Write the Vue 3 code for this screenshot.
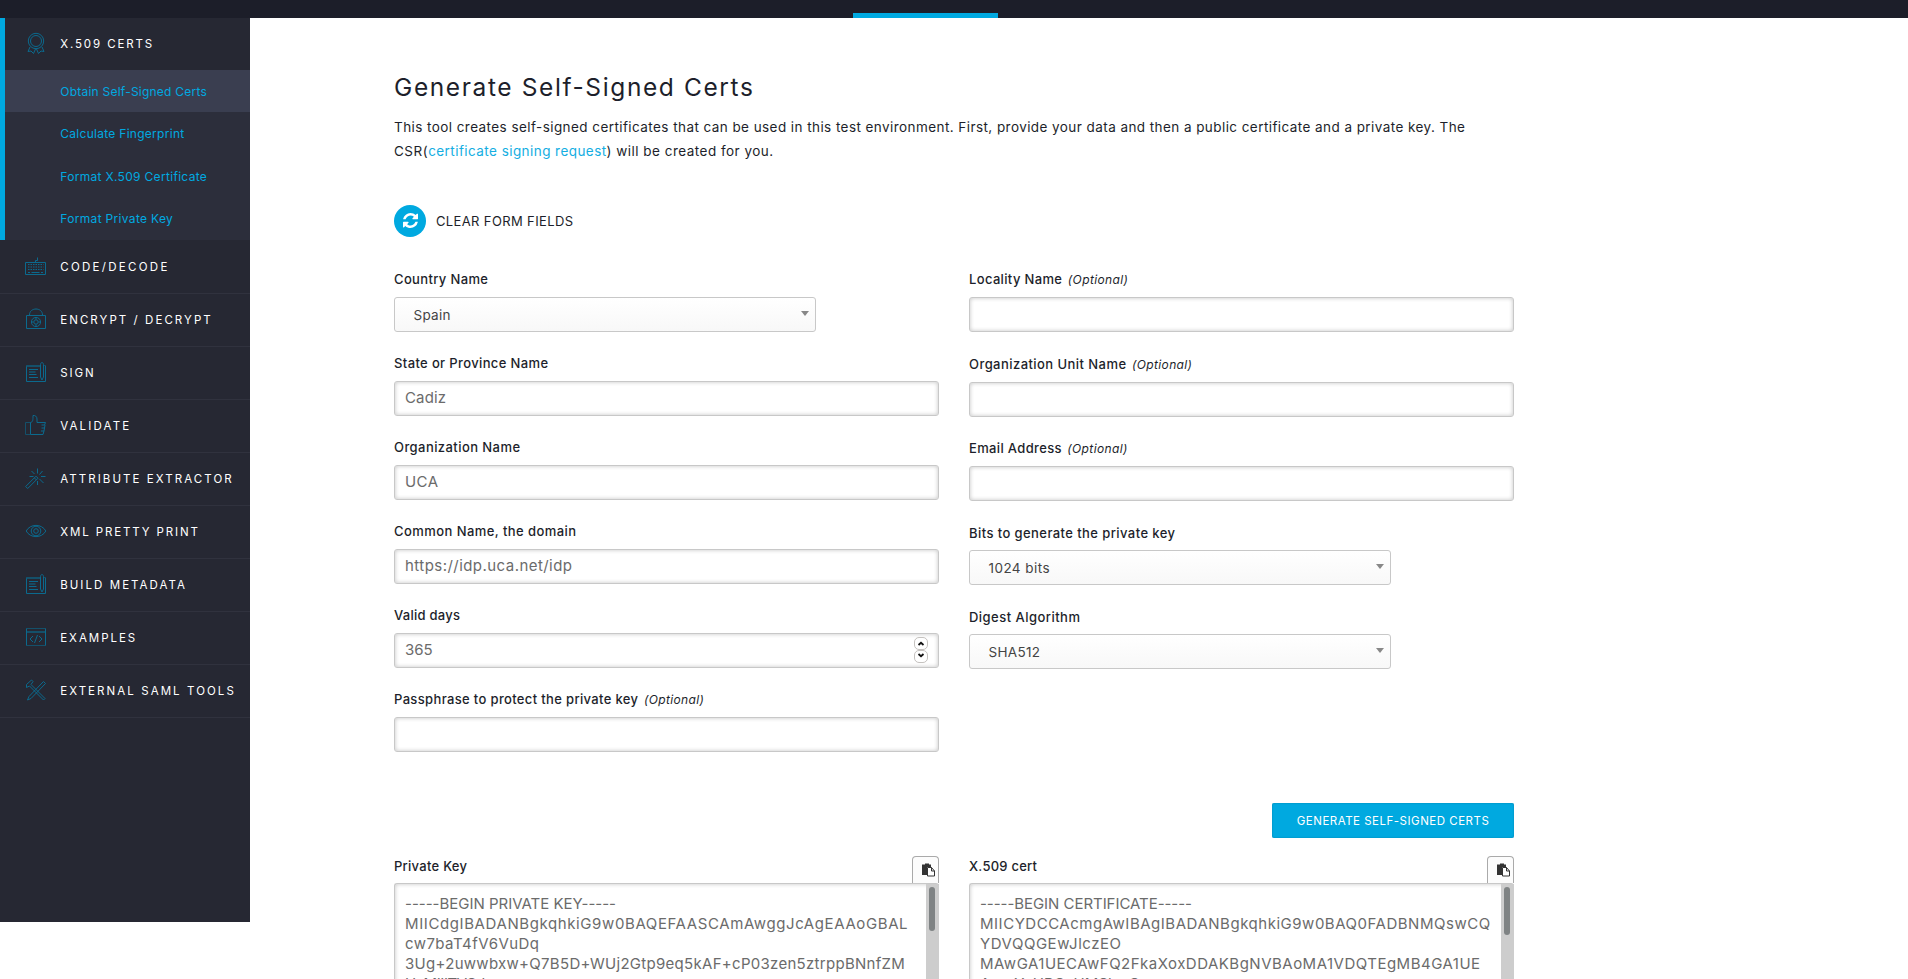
<script setup>
// `t` is the letter-spacing of a text, in pixels
const menu = [
  { label: 'CODE/DECODE', icon: 'keyboard', t: 2.3 },
  { label: 'ENCRYPT / DECRYPT', icon: 'lock', t: 2.06 },
  { label: 'SIGN', icon: 'doc', t: 1.93 },
  { label: 'VALIDATE', icon: 'thumb', t: 2.16 },
  { label: 'ATTRIBUTE EXTRACTOR', icon: 'wand', t: 2.07 },
  { label: 'XML PRETTY PRINT', icon: 'eye', t: 1.88 },
  { label: 'BUILD METADATA', icon: 'doc', t: 2.05 },
  { label: 'EXAMPLES', icon: 'code', t: 1.97 },
  { label: 'EXTERNAL SAML TOOLS', icon: 'tools', t: 2.07 },
]
const sub = [
  { label: 'Obtain Self-Signed Certs', t: 0.23 },
  { label: 'Calculate Fingerprint', t: 0.28 },
  { label: 'Format X.509 Certificate', t: 0.31 },
  { label: 'Format Private Key', t: 0.32 },
]
const left = [
  { label: 'Country Name', t: 0.36, select: true, value: 'Spain', vt: 0.28 },
  { label: 'State or Province Name', t: 0.37, value: 'Cadiz', vt: 0.13 },
  { label: 'Organization Name', t: 0.43, value: 'UCA', vt: 0.41 },
  { label: 'Common Name, the domain', t: 0.43, value: 'https://idp.uca.net/idp', vt: 0.45 },
  { label: 'Valid days', t: 0.26, value: '365', vt: -0.09, spin: true },
  { label: 'Passphrase to protect the private key', t: 0.35, opt: true, value: '' },
]
const right = [
  { label: 'Locality Name', t: 0.35, opt: true, value: '' },
  { label: 'Organization Unit Name', t: 0.44, opt: true, value: '' },
  { label: 'Email Address', t: 0.34, opt: true, value: '' },
  { label: 'Bits to generate the private key', t: 0.42, select: true, value: '1024 bits', vt: 0.44 },
  { label: 'Digest Algorithm', t: 0.47, select: true, value: 'SHA512', vt: 0.31 },
]
const outs = [
  {
    label: 'Private Key', t: 0.27, thumb: 44,
    lines: [
      ['-----BEGIN PRIVATE KEY-----', -0.01],
      ['MIICdgIBADANBgkqhkiG9w0BAQEFAASCAmAwggJcAgEAAoGBAL', 0.6],
      ['cw7baT4fV6VuDq', 0.43],
      ['3Ug+2uwwbxw+Q7B5D+WUj2Gtp9eq5kAF+cP03zen5ztrppBNnfZM', 0.29],
      ['HxMIIITVSdu', -0.4],
    ],
  },
  {
    label: 'X.509 cert', t: 0.24, thumb: 48,
    lines: [
      ['-----BEGIN CERTIFICATE-----', -0.05],
      ['MIICYDCCAcmgAwIBAgIBADANBgkqhkiG9w0BAQ0FADBNMQswCQ', 0.52],
      ['YDVQQGEwJlczEO', 0.52],
      ['MAwGA1UECAwFQ2FkaXoxDDAKBgNVBAoMA1VDQTEgMB4GA1UE', 0.49],
      ['AwwYzUBCzUMSkwC', 0.1],
    ],
  },
]
const ls = (t) => ({ letterSpacing: t + 'px' })
</script>

<template>
  <div class="page">
    <header class="topbar"><div class="tab"></div></header>
    <div class="body">
      <aside class="side">
        <div class="open">
          <div class="item first">
            <svg class="ic" viewBox="0 0 22 22"><circle cx="11" cy="9" r="7.700" /><circle cx="11" cy="9" r="5.500" /><path d="M5 15 3 19.500l3-.500L8.500 21.500l2-4.500M17 15 19 19.500l-3-.500L13.500 21.500l-2-4.500" /></svg>
            <span class="x509">X.509 CERTS</span>
          </div>
          <div v-for="(s, i) in sub" :key="s.label" class="sub" :class="{ on: i === 0 }"><span :style="ls(s.t)">{{ s.label }}</span></div>
        </div>
        <div v-for="m in menu" :key="m.label" class="item">
          <svg class="ic" viewBox="0 0 22 22">
            <template v-if="m.icon === 'keyboard'"><path d="M.5 7.500h20v12H.500zM10.500 7.500v-2h2v-3" /><path stroke-dasharray="1.500 1" d="M3 9.500h15.500M3 12h15.500M3 14.500h15.500" /><path d="M3 17.500h2M6.500 17.500h8M16 17.500h2" /></template>
            <template v-if="m.icon === 'lock'"><path d="M1.500 7.500h19v13h-19zM4.500 7c0-8 13-8 13 0" /><circle cx="11" cy="14" r="4.600" /><circle cx="11" cy="14" r="2.200" /><path d="M11 9.500v2M11 16.500v2M6.500 14h2M13.500 14h2" /></template>
            <template v-if="m.icon === 'doc'"><path d="M1.500 4.500v16h19v-16" /><path class="dim" d="M1.500 4.500H15M1.500 5.500H15M19 4.500h1.500" /><path d="M15.500 3.500c0-2.500 3-2.500 3 0V16L17 19l-1.500-3z" /><path d="M4 8.500h9M4 11h6.500M4 13.500h7.500M4 16.500h9" /></template>
            <template v-if="m.icon === 'thumb'"><path class="dim" d="M5.500 8.500h-5v12h5" /><path d="M5.500 20.500v-12c2.500-.500 2.500-2.500 2.500-7 2-.500 4 1 4 3.500v3.500h8.500l-1 2.500h-3m3.500 0-.500 3h-3m3 0-.500 3h-3m3 0-1 3.500h-12.500" /></template>
            <template v-if="m.icon === 'wand'"><path d="M.7 19.500 11 9.200l2 2L2.700 21.500zM9.500 11l2 2M12.500 6.500v-5M14.500 7.500l3-3.500M16 9.500h4.500M14.500 12l4 4M12.500 14v4M9.500 7 6.500 4M8.500 9.500H4.500" /></template>
            <template v-if="m.icon === 'eye'"><path d="M1.200 11c4-7.500 15.600-7.500 19.600 0-4 7.500-15.600 7.500-19.600 0z" /><circle cx="11" cy="11" r="4.800" /><circle cx="11" cy="11" r="2.300" /></template>
            <template v-if="m.icon === 'code'"><path class="dim" d="M1.500 2.500h19M1.500 19.500h19M1.500 5.500h19M1.500 6.500h19" /><path d="M1.500 2.500v17M20.500 2.500v17M8 10l-3 3 3 3M14 10l3 3-3 3M12.500 9 9.500 17" /></template>
            <template v-if="m.icon === 'tools'"><path d="M1.500 8.500v-3L6.500 1 8 2.500l-2 3 14 14-1.500 1.500L4.500 7zM18.500 2.500l2 2L6 19.500l-3.500 1.500L4 17.500z" /></template>
          </svg>
          <span :style="ls(m.t)">{{ m.label }}</span>
        </div>
      </aside>
      <main class="main">
        <h1>Generate Self-Signed Certs</h1>
        <p class="intro">
          <span>This tool creates self-signed certificates that can be used in this test environment. First, provide your data and then a public certificate and a private key. The</span><br><span class="csr">CSR(</span><a>certificate signing request</a><span class="rest">) will be created for you.</span>
        </p>
        <div class="clear">
          <div class="circle"><svg viewBox="0 0 1536 1536" width="15" height="15"><path fill="#fff" d="M1511 928q0 5-1 7-64 268-268 434.500T764 1536q-146 0-282.500-55T238 1324l-129 129q-19 19-45 19t-45-19-19-45V960q0-26 19-45t45-19h448q26 0 45 19t19 45-19 45l-137 137q71 66 161 102t187 36q134 0 250-65t186-179q11-17 53-117 8-23 30-23h192q13 0 22.500 9.500t9.500 22.500zm25-800v448q0 26-19 45t-45 19h-448q-26 0-45-19t-19-45 19-45l138-138Q969 256 768 256q-134 0-250 65T332 500q-11 17-53 117-8 23-30 23H50q-13 0-22.500-9.500T18 608v-7q65-268 270-434.500T768 0q146 0 284 55.500T1297 212l130-129q19-19 45-19t45 19 19 45z" /></svg></div>
          <span>CLEAR FORM FIELDS</span>
        </div>
        <div class="form">
          <div v-for="(col, ci) in [left, right]" :key="ci" class="col">
            <div v-for="f in col" :key="f.label" class="field">
              <div class="label"><b :style="ls(f.t)">{{ f.label }}</b><i v-if="f.opt">(Optional)</i></div>
              <div v-if="f.select" class="select"><span :style="ls(f.vt)">{{ f.value }}</span><em class="arrow"></em></div>
              <div v-else class="input">
                <span v-if="f.value" :style="ls(f.vt)">{{ f.value }}</span>
                <div v-if="f.spin" class="spin">
                  <div><svg viewBox="0 0 14 13"><path d="m4.500 8 2.500-2.200L9.500 8" /></svg></div>
                  <div><svg viewBox="0 0 14 13"><path d="m4.500 4 2.500 2.200L9.500 4" /></svg></div>
                </div>
              </div>
            </div>
          </div>
        </div>
        <button class="go">GENERATE SELF-SIGNED CERTS</button>
        <div class="outs">
          <div v-for="o in outs" :key="o.label" class="out">
            <div class="ohead">
              <b :style="ls(o.t)">{{ o.label }}</b>
              <div class="copy"><svg viewBox="0 0 14 14" width="14" height="14"><path fill="#333" d="M0 1.500h3V.500h4v1h2V4H5v8H0z" /><path fill="#fff" stroke="#333" d="M5.500 4.500h4l3 3.500v5h-7zM9.500 4.500V8h3" /></svg></div>
            </div>
            <div class="area">
              <div class="lines"><div v-for="l in o.lines" :key="l[0]"><span :style="ls(l[1])">{{ l[0] }}</span></div></div>
              <div class="track"><div class="thumb" :style="{ height: o.thumb + 'px' }"></div></div>
            </div>
          </div>
        </div>
      </main>
    </div>
  </div>
</template>

<style>
body { overflow: hidden; }
</style>
<style scoped>
.page { height: 979px; overflow: hidden; background: #fff; font-family: Inter, 'Liberation Sans', sans-serif; color: #1d1f2b; }
.page span, .page b, .page i, .page a { white-space: nowrap; }
.topbar { height: 18px; background: #1c1e29; padding-left: 853px; display: flex; align-items: flex-end; }
.tab { width: 145px; height: 5px; background: #00a9e0; }
.body { display: flex; align-items: flex-start; }
.side { width: 250px; height: 904px; background: #262833; color: #fff; flex: none; }
.open { border-left: 5px solid #00a9e0; height: 222px; background: #2c2e3b; margin-bottom: 1px; }
.item { height: 53px; box-sizing: border-box; border-bottom: 1px solid #30323e; padding: 0 0 0 25px; display: flex; align-items: center; font-size: 11.500px; }
.open .first { padding-left: 20px; background: #262833; height: 52px; border: 0; }
.x509 { letter-spacing: 1.890px; }
.ic { width: 22px; height: 22px; margin: 0 13.200px 2px 0; fill: none; stroke: #0b6a8e; stroke-width: 1; flex: none; }
.dim { stroke: #14506a; }
.sub { height: 42.700px; padding-left: 55.300px; display: flex; align-items: center; font-size: 12px; color: #00a9e0; }
.sub.on { background: #3a3e50; height: 42px; }
.main { padding: 54px 0 0 144px; width: 1120px; }
h1 { margin: 0; font-size: 24.500px; line-height: 30px; font-weight: 400; letter-spacing: 1.610px; }
.intro { margin: 13px 0 0; font-size: 13.500px; line-height: 24.300px; letter-spacing: .430px; }
.intro a { color: #14aee2; letter-spacing: .440px; }
.intro .csr { letter-spacing: .500px; }
.intro .rest { letter-spacing: .480px; }
.clear { display: flex; align-items: center; gap: 10px; margin-top: 41.400px; height: 32px; font-size: 13px; letter-spacing: .370px; }
.circle { width: 32px; height: 32px; border-radius: 50%; background: #00a9e0; display: flex; align-items: center; justify-content: center; }
.form { display: flex; gap: 30px; margin-top: 33px; height: 482px; }
.col { width: 545px; }
.field { margin-bottom: 22px; }
.col:nth-child(2) .field:first-child { margin-bottom: 23px; }
.label { height: 20px; line-height: 19px; font-size: 13px; margin-bottom: 7px; display: flex; gap: 5.500px; }
.col:nth-child(2) .field:nth-child(n + 4) .label { line-height: 20px; }
b { font-weight: 500; }
.label i { font-size: 12px; line-height: 20px; letter-spacing: .370px; }
.select { width: 422px; height: 35px; box-sizing: border-box; border: 1px solid #c8c8c8; border-radius: 3px; background: linear-gradient(#fff, #f8f8f8); display: flex; align-items: center; justify-content: space-between; padding: 1px 6px 0 18.500px; font-size: 13.500px; color: #444; }
.arrow { border: 4px solid transparent; border-top: 5px solid #888; border-bottom: 0; margin-bottom: 3px; }
.input { height: 35px; box-sizing: border-box; border: 1px solid #c8c8c8; border-radius: 3px; box-shadow: inset 0 0 4px #c4c4c4; display: flex; align-items: center; justify-content: space-between; padding: 0 10px 1px; font-size: 15px; color: #6b6b6b; }
.spin div { width: 14px; height: 13px; box-sizing: border-box; border: 1px solid #c5c2bf; border-radius: 5px; display: flex; }
.spin svg { margin: -1px; width: 14px; height: 13px; fill: none; stroke: #111; stroke-width: 1.800; flex: none; }
.go { display: block; width: 242px; height: 35px; margin: 51px 0 0 auto; border: 0; border-radius: 2px; background: #00a9e0; color: #fff; font-family: inherit; font-size: 11.500px; letter-spacing: .500px; padding: 2px 0 0; white-space: nowrap; box-shadow: inset 0 0 2px #0380ac; }
.outs { display: flex; gap: 30px; margin-top: 18px; }
.out { width: 545px; }
.ohead { display: flex; justify-content: space-between; height: 27px; font-size: 13px; line-height: 21px; }
.copy { width: 27px; height: 27px; box-sizing: border-box; border: 1px solid #aaa; border-bottom: 0; border-radius: 4px 4px 0 0; padding: 6px 0 0 9px; background: #fcfcfc; line-height: 0; }
.area { height: 200px; border: 1px solid #c8c8c8; border-right: 0; border-radius: 3px; box-sizing: border-box; box-shadow: inset 0 0 4px #c4c4c4; display: flex; justify-content: space-between; }
.lines { padding: 10px 0 0 10px; font-size: 15px; line-height: 20px; color: #6b6b6b; width: 500px; }
.track { width: 13px; box-sizing: border-box; background: #cdcdcd; padding: 3px 0 0 3px; }
.thumb { width: 6px; background: #7f8384; border-radius: 3px; }
</style>
